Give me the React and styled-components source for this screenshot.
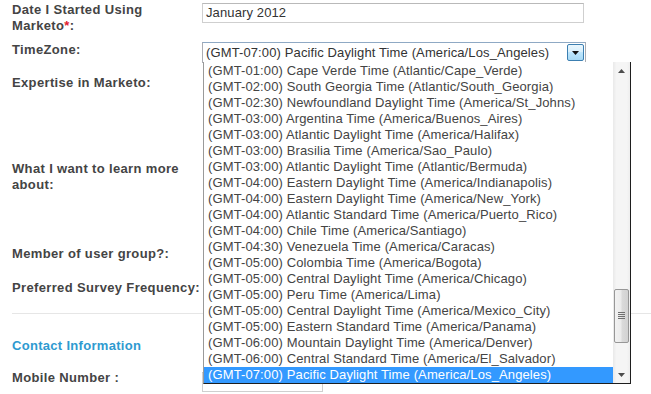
import styled, { createGlobalStyle } from "styled-components"

const Global = createGlobalStyle`
  html, body {
    margin: 0;
    padding: 0;
    background: #fff;
  }
  body {
    font-family: "Liberation Sans", Arial, sans-serif;
    font-size: 13px;
    color: #444;
    overflow: hidden;
  }
`

const Page = styled.div`
  width: 651px;
  height: 394px;
  padding: 2px 0 0 12px;
  box-sizing: border-box;
  overflow: hidden;
`

const Row = styled.div`
  display: grid;
  grid-template-columns: 190px 1fr;
  align-items: start;
  height: ${(p) => p.h}px;
`

const Label = styled.div`
  font-weight: bold;
  line-height: 16px;
  letter-spacing: 0.35px;
  color: #444;
  white-space: nowrap;
`

const Req = styled.span`
  color: #e0202e;
`

const Field = styled.div`
  position: relative;
  padding-top: ${(p) => p.top || 0}px;
`

const TextInput = styled.div`
  box-sizing: border-box;
  width: ${(p) => p.w}px;
  height: 20px;
  border: 1px solid #cfcfcf;
  border-top-color: #b9b9b9;
  padding: 1px 0 0 3px;
  line-height: 16px;
  letter-spacing: 0.12px;
  color: #333;
  background: #fff;
`

const Rule = styled.div`
  height: 1px;
  background: #e6e6e6;
  margin: 0 0 24px 0;
`

const Heading = styled.div`
  font-weight: bold;
  line-height: 16px;
  letter-spacing: 0.3px;
  color: #2e9ad0;
  height: 32px;
`

const Select = styled.div`
  position: relative;
  box-sizing: border-box;
  width: 384px;
  height: 21px;
  border: 1px solid #abadb3;
  border-top-color: #8fa9c4;
  display: flex;
  align-items: center;
  justify-content: space-between;
  padding-left: 3px;
  color: #333;
  background: #fff;
`

const SelectText = styled.span`
  line-height: 16px;
  letter-spacing: 0.12px;
`

const ArrowButton = styled.div`
  box-sizing: border-box;
  width: 17px;
  height: 17px;
  margin-right: 1px;
  border: 1px solid #3c7fb1;
  border-radius: 2px;
  background: linear-gradient(#eaf6fd, #d9f0fc 45%, #bee6fd 50%, #a7d9f5);
  display: flex;
  align-items: center;
  justify-content: center;
`

const List = styled.div`
  position: absolute;
  top: 100%;
  left: 0;
  width: 428px;
  height: 322px;
  box-sizing: border-box;
  border: 1px solid #1e1e1e;
  border-left-color: #9a9a9a;
  border-top: none;
  background: #fff;
  display: flex;
  z-index: 5;
`

const Items = styled.div`
  flex: 1;
  padding-top: 1px;
`

const Item = styled.div`
  height: 16px;
  line-height: 16px;
  padding-left: 4px;
  letter-spacing: 0.12px;
  white-space: nowrap;
  color: ${(p) => (p.selected ? "#fff" : "#444")};
  background: ${(p) => (p.selected ? "#3399ff" : "transparent")};
`

const Scrollbar = styled.div`
  width: 17px;
  display: flex;
  flex-direction: column;
  background: linear-gradient(90deg, #e9e9e9, #f5f5f5 20%, #f5f5f5 80%, #eeeeee);
`

const ScrollArrow = styled.div`
  height: 17px;
  display: flex;
  align-items: center;
  justify-content: center;
`

const Track = styled.div`
  flex: 1;
  display: flex;
  flex-direction: column;
  padding-top: ${(p) => p.offset}px;
`

const Thumb = styled.div`
  box-sizing: border-box;
  margin: 0 1px;
  height: ${(p) => p.h}px;
  border: 1px solid #979797;
  border-radius: 2px;
  background: linear-gradient(90deg, #f2f2f2, #ebebeb 45%, #dadada 55%, #d2d2d2);
  display: flex;
  align-items: center;
  justify-content: center;
`

const zones = [
  "(GMT-01:00) Cape Verde Time (Atlantic/Cape_Verde)",
  "(GMT-02:00) South Georgia Time (Atlantic/South_Georgia)",
  "(GMT-02:30) Newfoundland Daylight Time (America/St_Johns)",
  "(GMT-03:00) Argentina Time (America/Buenos_Aires)",
  "(GMT-03:00) Atlantic Daylight Time (America/Halifax)",
  "(GMT-03:00) Brasilia Time (America/Sao_Paulo)",
  "(GMT-03:00) Atlantic Daylight Time (Atlantic/Bermuda)",
  "(GMT-04:00) Eastern Daylight Time (America/Indianapolis)",
  "(GMT-04:00) Eastern Daylight Time (America/New_York)",
  "(GMT-04:00) Atlantic Standard Time (America/Puerto_Rico)",
  "(GMT-04:00) Chile Time (America/Santiago)",
  "(GMT-04:30) Venezuela Time (America/Caracas)",
  "(GMT-05:00) Colombia Time (America/Bogota)",
  "(GMT-05:00) Central Daylight Time (America/Chicago)",
  "(GMT-05:00) Peru Time (America/Lima)",
  "(GMT-05:00) Central Daylight Time (America/Mexico_City)",
  "(GMT-05:00) Eastern Standard Time (America/Panama)",
  "(GMT-06:00) Mountain Daylight Time (America/Denver)",
  "(GMT-06:00) Central Standard Time (America/El_Salvador)",
  "(GMT-07:00) Pacific Daylight Time (America/Los_Angeles)",
]

const selected = zones[zones.length - 1]

const Tri = ({ up, color = "#4d4d4d" }) => (
  <svg width="7" height="4" viewBox="0 0 7 4">
    <path d={up ? "M0 4 L3.5 0 L7 4 Z" : "M0 0 L7 0 L3.5 4 Z"} fill={color} />
  </svg>
)

const Grip = () => (
  <svg width="7" height="8" viewBox="0 0 7 8">
    {[0.5, 2.5, 4.5, 6.5].map((y) => (
      <line key={y} x1="0" x2="7" y1={y} y2={y} stroke="#6f6f6f" strokeWidth="1" />
    ))}
  </svg>
)

const TimeZoneSelect = () => (
  <Select>
    <SelectText>{selected}</SelectText>
    <ArrowButton>
      <Tri color="#111" />
    </ArrowButton>
    <List>
      <Items>
        {zones.map((z) => (
          <Item key={z} selected={z === selected}>
            {z}
          </Item>
        ))}
      </Items>
      <Scrollbar>
        <ScrollArrow>
          <Tri up />
        </ScrollArrow>
        <Track offset={210}>
          <Thumb h={54}>
            <Grip />
          </Thumb>
        </Track>
        <ScrollArrow>
          <Tri />
        </ScrollArrow>
      </Scrollbar>
    </List>
  </Select>
)

export default function App() {
  return (
    <>
      <Global />
      <Page>
        <Row h={40}>
          <Label>
            Date I Started Using
            <br />
            Marketo<Req>*</Req>:
          </Label>
          <Field top={1}>
            <TextInput w={382}>January 2012</TextInput>
          </Field>
        </Row>
        <Row h={33}>
          <Label>TimeZone:</Label>
          <Field top={0}>
            <TimeZoneSelect />
          </Field>
        </Row>
        <Row h={86}>
          <Label>Expertise in Marketo:</Label>
          <Field />
        </Row>
        <Row h={85}>
          <Label>
            What I want to learn more
            <br />
            about:
          </Label>
          <Field />
        </Row>
        <Row h={34}>
          <Label>Member of user group?:</Label>
          <Field />
        </Row>
        <Row h={33}>
          <Label>Preferred Survey Frequency:</Label>
          <Field />
        </Row>
        <Rule />
        <Heading>Contact Information</Heading>
        <Row h={24}>
          <Label>Mobile Number :</Label>
          <Field top={2}>
            <TextInput w={121} />
          </Field>
        </Row>
      </Page>
    </>
  )
}
